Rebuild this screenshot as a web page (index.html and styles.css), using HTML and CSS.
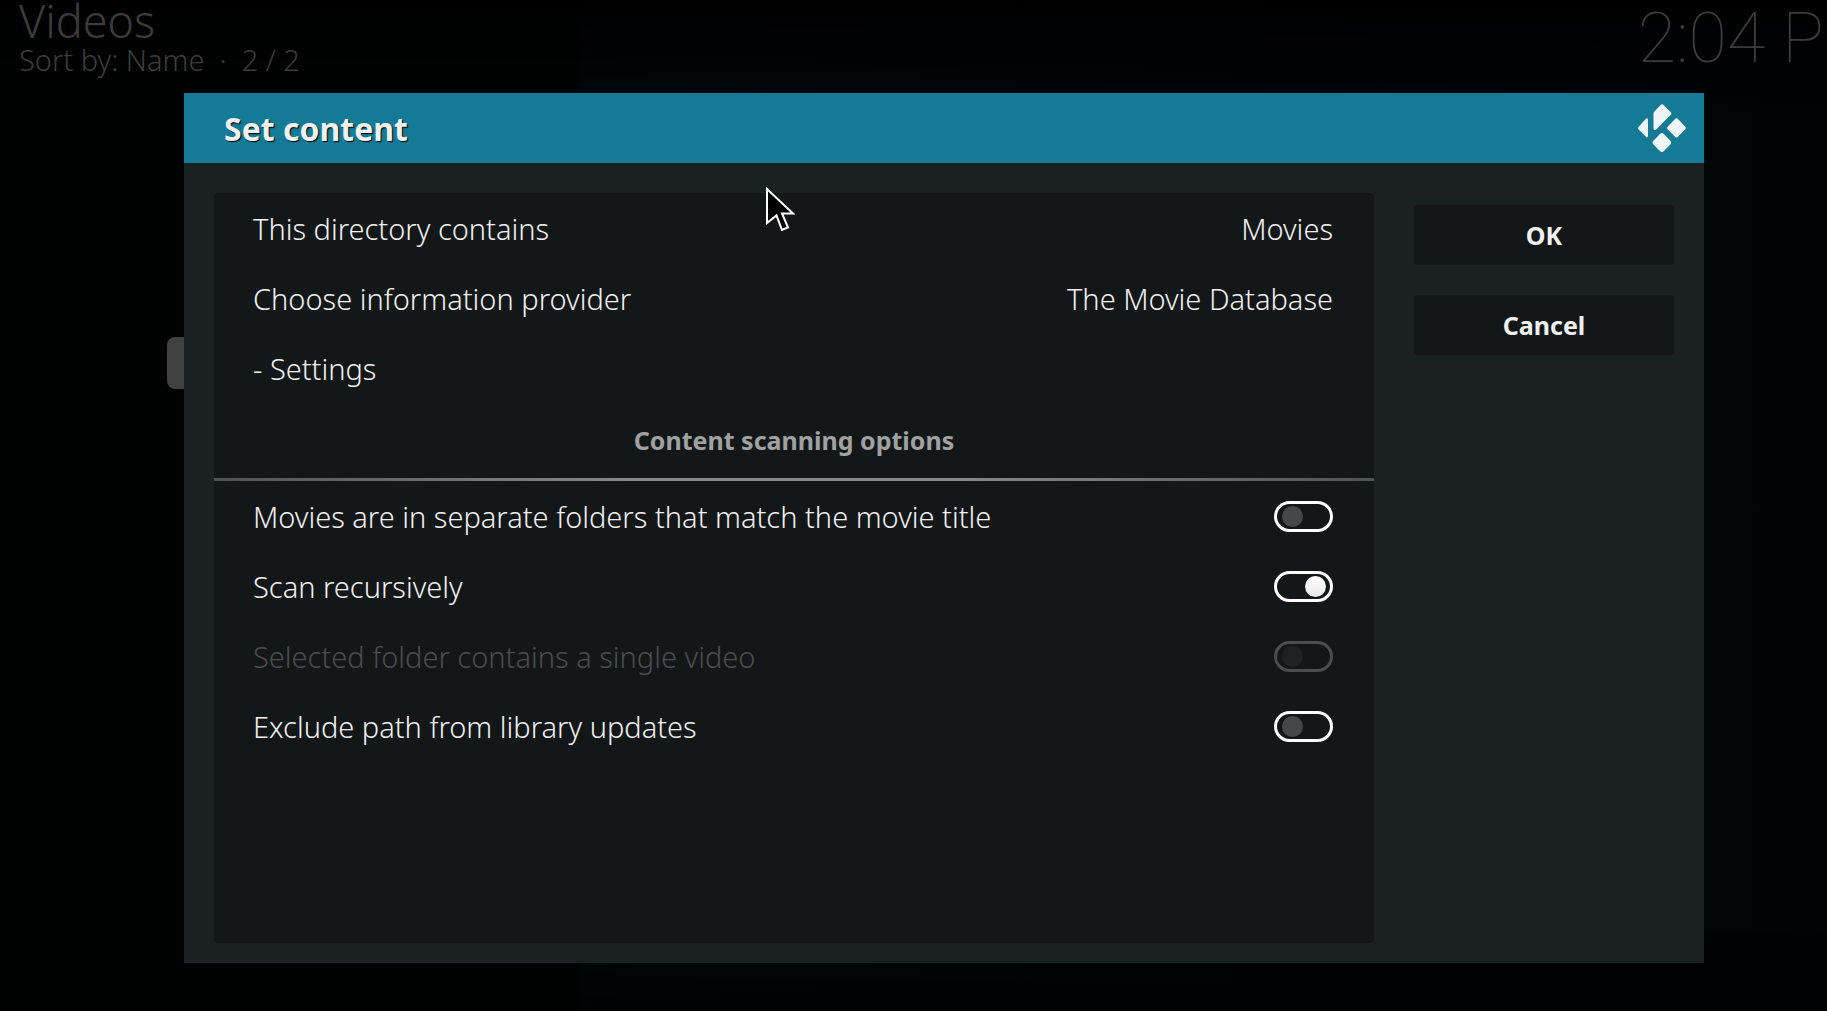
FILE: index.html
```html
<!DOCTYPE html>
<html lang="en">
	<head>
		<meta charset="utf-8">
		<title>Set content</title>
		<link rel="stylesheet" href="styles.css">
	</head>
	<body>
		<header class="topbar">
			<div>
				<h1>Videos</h1>
				<p>Sort by: Name &nbsp;·&nbsp; 2 / 2</p>
			</div>
			<time class="clock">2:04 P</time>
		</header>
		<main class="dialog" role="dialog" aria-labelledby="title">
			<div class="side-tab"></div>
			<div class="titlebar">
				<h2 id="title">Set content</h2>
				<svg class="logo" viewBox="0 0 48 48" aria-hidden="true">
					<path d="M10 15V32.500q-1 1.300-2.100.200L.700 25.600a2 2 0 0 1 0-2.800L7.900 14.800q1.100-1 2.100.200z"/>
					<path d="M15.500 9.500q0-1.200.900-2.100L22.400 1.200q1.700-1.700 3.400 0l7 7q1.300 1.300 0 2.600L18.200 25.400q-2.700 1.700-2.700-1.200z"/>
					<path d="M36.800 15.200q1.700-1.700 3.400 0l7 7.200q1.300 1.600 0 3.200l-7 7q-1.700 1.700-3.400 0l-7-7q-1.500-1.600 0-3.200z"/>
					<path d="M22.200 29.800q1.700-1.700 3.400 0l7 7.200q1.300 1.600 0 3.200l-7 7q-1.700 1.700-3.400 0l-7-7q-1.500-1.600 0-3.200z"/>
				</svg>
			</div>
			<form class="content">
				<div class="settings">
					<button type="button" class="row"><span>This directory contains</span><span>Movies</span></button>
					<button type="button" class="row"><span>Choose information provider</span><span>The Movie Database</span></button>
					<button type="button" class="row"><span>- Settings</span></button>
					<h3>Content scanning options</h3>
					<label class="row" for="separate">Movies are in separate folders that match the movie title
						<input type="checkbox" id="separate">
					</label>
					<label class="row" for="recursive">Scan recursively
						<input type="checkbox" id="recursive" checked>
					</label>
					<label class="row disabled" for="single">Selected folder contains a single video
						<input type="checkbox" id="single" disabled>
					</label>
					<label class="row" for="exclude">Exclude path from library updates
						<input type="checkbox" id="exclude">
					</label>
				</div>
				<div class="actions">
					<button type="button">OK</button>
					<button type="button">Cancel</button>
				</div>
			</form>
		</main>
		<svg class="cursor" viewBox="0 0 30 46" aria-hidden="true">
			<path d="M2 2V36L11.500 28.500L17 43L23 40.500L17 26.500H28Z"/>
		</svg>
	</body>
</html>
```

FILE: styles.css
```css
* {
	box-sizing: border-box;
}
body {
	margin: 0;
	min-height: 100vh;
	display: flex;
	flex-direction: column;
	overflow: hidden;
	position: relative;
	background:
		linear-gradient(#000, transparent 120px, transparent 90%, rgba(0, 0, 0, 0.6)),
		linear-gradient(90deg, #010303 580px, #00070b 580px, #000406);
	color: #f0f0f0;
	font-family: "Noto Sans", "Open Sans", sans-serif;
	font-weight: 300;
}
h1, h2, h3, p {
	margin: 0;
}
button {
	border: 0;
	color: inherit;
	font: inherit;
}

.topbar {
	height: 93px;
	padding: 0 3px 0 19px;
	display: flex;
	justify-content: space-between;
	color: #3c3c3c;
}
.topbar h1 {
	font-size: 45px;
	font-weight: 300;
	line-height: 42px;
}
.topbar p {
	font-size: 29px;
	line-height: 36px;
}
.clock {
	font-family: Roboto, sans-serif;
	font-size: 70px;
	font-weight: 100;
	line-height: 76px;
}

.dialog {
	flex: 1;
	margin: 0 123px 48px 184px;
	display: flex;
	flex-direction: column;
	position: relative;
	background: #1a2123;
}
.side-tab {
	position: absolute;
	right: 100%;
	top: 244px;
	width: 17px;
	height: 52px;
	border-radius: 8px 0 0 8px;
	background: #404040;
}
.titlebar {
	height: 70px;
	padding: 0 18px 0 40px;
	display: flex;
	align-items: center;
	justify-content: space-between;
	background: #157a96;
}
.titlebar h2 {
	padding-top: 2px;
	font-size: 32px;
	line-height: 40px;
	text-shadow: 1px 1px 1px #000;
}
.logo {
	width: 48px;
	height: 48px;
	fill: #edf5f8;
}
.content {
	flex: 1;
	padding: 30px 30px 20px;
	display: flex;
	gap: 40px;
}
.settings {
	flex: 1;
	border-radius: 4px;
	background: #141718;
}
.row {
	width: 100%;
	height: 70px;
	padding: 0 41px 0 39px;
	display: flex;
	align-items: center;
	justify-content: space-between;
	background: none;
	font-size: 29px;
}
.settings h3 {
	height: 78px;
	border-bottom: 3px solid;
	border-image: linear-gradient(90deg, #505253, #858788 35%, #858788 65%, #505253) 1;
	color: #a0a1a1;
	font-size: 25px;
	line-height: 74px;
	text-align: center;
}
.row input {
	appearance: none;
	width: 59px;
	height: 31px;
	margin: 0;
	padding: 2px 4px 2px 5px;
	border: 3px solid #fff;
	border-radius: 16px;
}
.row input::before {
	content: "";
	display: block;
	width: 21px;
	height: 21px;
	border-radius: 50%;
	background: #464748;
}
.row input:checked::before {
	margin-left: auto;
	background: linear-gradient(#fff, #e8e8e8);
}
.disabled {
	color: #4b4d4e;
}
.disabled input {
	border-color: #4b4d4e;
}
.disabled input::before {
	background: #1e2223;
}

.actions {
	width: 260px;
	padding-top: 12px;
	display: flex;
	flex-direction: column;
	gap: 30px;
}
.actions button {
	height: 60px;
	border-radius: 4px;
	background: #141718;
	font-size: 25px;
	font-weight: 700;
}

.cursor {
	position: absolute;
	left: 765px;
	top: 187px;
	width: 30px;
	height: 46px;
	fill: #000;
	stroke: #fff;
	stroke-width: 2;
}
```
